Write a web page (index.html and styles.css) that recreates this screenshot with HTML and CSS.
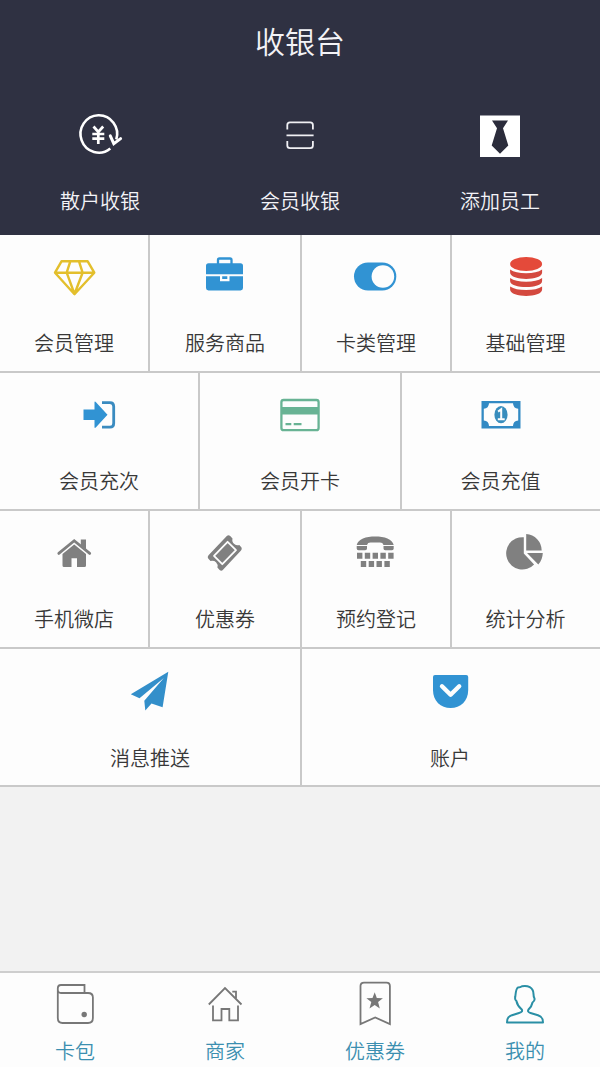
FILE: index.html
```html
<!DOCTYPE html>
<html lang="zh-CN">
<head>
<meta charset="utf-8">
<title>收银台</title>
<link rel="stylesheet" href="styles.css">
</head>
<body>
<div class="app">
  <header class="header">
    <h1 class="title">收银台</h1>
    <div class="quick">
      <a class="quick-item">
        <svg class="icon" viewBox="76 112 48 48" fill="none" stroke="#fff" stroke-width="2.600">
          <path d="M110.300 148.500A18.300 18.700 0 1 1 116.300 139.500"/>
          <path d="M110.300 135.800L113.800 143.600L120.600 138.600" stroke-width="3" stroke-linecap="round"/>
          <path d="M93.500 126.500L98.300 132L103.200 126.500M98.300 132V144M92.300 134H104.300M92.300 138.700H104.300" stroke-width="2.700"/>
        </svg>
        <span class="label">散户收银</span>
      </a>
      <a class="quick-item">
        <svg class="icon" viewBox="276 112 48 48" fill="none" stroke="#f0f0f4" stroke-width="1.800">
          <path d="M287.300 129.500V125Q287.300 122.300 290 122.300H310.200Q312.900 122.300 312.900 125V129.500M286.500 135.400H313.600M287.300 141V145.500Q287.300 148.200 290 148.200H310.200Q312.900 148.200 312.900 145.500V141"/>
        </svg>
        <span class="label">会员收银</span>
      </a>
      <a class="quick-item">
        <svg class="icon" viewBox="476 112 48 48">
          <path fill="#fff" d="M480 115.500H520V157H480Z"/>
          <path fill="#2b2c3b" d="M492 120.500H508L503 128.200L508.300 145.500L500 153.700L491.700 145.500L497 128.200Z"/>
        </svg>
        <span class="label">添加员工</span>
      </a>
    </div>
  </header>

  <main class="menu">
    <section class="row row-four">
      <a class="cell">
        <svg class="icon" viewBox="50 252 48 48" fill="none" stroke="#e3bf2c" stroke-width="2.400" stroke-linejoin="round">
          <path d="M61.500 261.300H87.700L94.300 272.700L74.500 294.200L55 272.700ZM55 272.700H94.300M70.300 261.300L66.700 272.700L74.500 294L82.600 272.700L79 261.300"/>
        </svg>
        <span class="label">会员管理</span>
      </a>
      <a class="cell">
        <svg class="icon" viewBox="201 252 48 48" fill="#3193d3">
          <path d="M218 264V260Q218 258.500 219.500 258.500H230Q231.500 258.500 231.500 260V264" fill="none" stroke="#3193d3" stroke-width="2.300"/>
          <path d="M208.500 263.300H240.500Q243 263.300 243 265.800V274.300H206V265.800Q206 263.300 208.500 263.300ZM206 276.300H220V281.200H229.500V276.300H243V288Q243 290.400 240.500 290.400H208.500Q206 290.400 206 288ZM222.200 276.300H227.300V279H222.200Z"/>
        </svg>
        <span class="label">服务商品</span>
      </a>
      <a class="cell">
        <svg class="icon" viewBox="352 252 48 48">
          <rect x="354" y="262.500" width="42.300" height="28" rx="14" fill="#3193d3"/>
          <circle cx="382.900" cy="276.500" r="11.300" fill="#fdfdfd"/>
        </svg>
        <span class="label">卡类管理</span>
      </a>
      <a class="cell">
        <svg class="icon" viewBox="501.500 252 48 48" fill="#d4493f">
          <ellipse cx="525.600" cy="264" rx="16" ry="6.900" fill="#e44a3a"/>
          <path d="M509.600 269.500Q515 273.300 525.600 273.300T541.600 269.500V272.500C541.600 281 509.600 281 509.600 272.500ZM509.600 278Q515 281.800 525.600 281.800T541.600 278V281C541.600 289 509.600 289 509.600 281ZM509.600 286.500Q515 290 525.600 290T541.600 286.500V289.500C541.600 298 509.600 298 509.600 289.500Z"/>
        </svg>
        <span class="label">基础管理</span>
      </a>
    </section>

    <section class="row row-three">
      <a class="cell">
        <svg class="icon" viewBox="75 390 48 48" fill="#3193d3">
          <path d="M83.500 409.500H94.500V402.600Q94.500 400.800 96 402.200L107.500 414.700L96 427.300Q94.500 428.700 94.500 427V420H83.500Z"/>
          <path d="M102 402.600H110Q113.700 402.600 113.700 406.500V423.200Q113.700 427.200 110 427.200H102" fill="none" stroke="#3a8bc0" stroke-width="2.800"/>
        </svg>
        <span class="label">会员充次</span>
      </a>
      <a class="cell">
        <svg class="icon" viewBox="276 390 48 48" fill="#68b394">
          <rect x="281.400" y="400" width="37.200" height="30.200" rx="2.200" fill="none" stroke="#68b394" stroke-width="2.300"/>
          <path d="M281 407H319V414.500H281ZM285.500 423H291.300V425.200H285.500ZM293.700 423H301.500V425.200H293.700Z"/>
        </svg>
        <span class="label">会员开卡</span>
      </a>
      <a class="cell">
        <svg class="icon" viewBox="476.500 390 48 48">
          <path fill="#328ac4" fill-rule="evenodd" d="M481 401H520V428.400H481ZM488.500 403.300Q488.300 408.300 483.300 408.800V420.600Q488.300 421 488.500 426H512.500Q512.700 421 517.700 420.600V408.800Q512.700 408.300 512.500 403.300Z"/>
          <ellipse cx="500.500" cy="414.700" rx="6.600" ry="8.600" fill="#388dbd"/>
          <path d="M497.600 411.600L500.700 409.300V418.800M497.300 419.300H504.200" fill="none" stroke="#fdfdfd" stroke-width="2"/>
        </svg>
        <span class="label">会员充值</span>
      </a>
    </section>

    <section class="row row-four">
      <a class="cell">
        <svg class="icon" viewBox="50 528 48 48" fill="#808080">
          <path d="M58.800 553.400L74.200 540.700L89.700 553.400" fill="none" stroke="#808080" stroke-width="2.800" stroke-linecap="round"/>
          <path d="M80.800 539.500H86V550L80.800 545.500ZM62.500 554L74.200 544.500L86 554V565.500Q86 567 84.500 567H77V558.300H71.500V567H64Q62.500 567 62.500 565.500Z"/>
        </svg>
        <span class="label">手机微店</span>
      </a>
      <a class="cell">
        <svg class="icon" viewBox="201 528 48 48">
          <path fill="#808080" d="M226.800 536Q228.500 534.300 230.200 536L232.500 538.500Q231.700 542 234.300 544Q236.500 545.700 239.300 545L241.500 547.500Q242.300 549 241 550.600L223 569.800Q221.500 571.600 219.600 570L217.400 567.500Q218.300 564.500 216 562.300Q214 560.300 210.500 561L208.200 558.500Q207 557 208.500 555.200Z"/>
          <path fill="#808080" stroke="#fdfdfd" stroke-width="1.800" stroke-linejoin="round" d="M227.600 541.800L236 550.200L222.300 564.200L214 555.800Z"/>
        </svg>
        <span class="label">优惠券</span>
      </a>
      <a class="cell">
        <svg class="icon" viewBox="352 528 48 48" fill="#808080">
          <path d="M356.700 545C358 539 366 536.500 375.200 536.500S392.500 539 393.700 545H383.500Q382.800 542.600 380 542.600H370.500Q367.600 542.600 367 545ZM356.700 546H367V548.500Q367 550.200 365.200 550.200H358.500Q356.700 550.200 356.700 548.500ZM383.500 546H393.700V548.500Q393.700 550.200 392 550.200H385.200Q383.500 550.200 383.500 548.500Z"/>
          <path d="M357 552.800h5.400v6h-5.400zM364.800 552.800h5.400v6h-5.400zM372.600 552.800h5.400v6h-5.400zM380.400 552.800h5.400v6h-5.400zM388.200 552.800h5.400v6h-5.400zM360.800 561h5.400v6h-5.400zM368.700 561h5.400v6h-5.400zM376.500 561h5.400v6h-5.400zM384.400 561h5.400v6h-5.400z"/>
        </svg>
        <span class="label">预约登记</span>
      </a>
      <a class="cell">
        <svg class="icon" viewBox="501.500 528 48 48" fill="#808080">
          <path d="M523.300 537.200V553.500L533.600 564.500A16.200 16.200 0 1 1 523.300 537.200ZM525.700 534A16.500 16.500 0 0 1 541.200 550.500H525.700ZM526.500 553H542.300Q542 560 537.800 564.500Z"/>
        </svg>
        <span class="label">统计分析</span>
      </a>
    </section>

    <section class="row row-two">
      <a class="cell">
        <svg class="icon" viewBox="126 666 48 48" fill="#338fca">
          <path d="M168.300 671.800L162.600 707.200L151.500 703.500L145.300 710.500L144.300 700.800L163.800 678L139.500 698.200L130.800 694.200Z"/>
        </svg>
        <span class="label">消息推送</span>
      </a>
      <a class="cell cell-account">
        <svg class="icon" viewBox="426 666 48 48" fill="#3193d3">
          <path d="M435 675H466.200Q468.200 675 468.200 677V690C468.200 701 460.500 708 450.600 708S433 701 433 690V677Q433 675 435 675Z"/>
          <path d="M442 686.300L450.600 694.700L459.200 686.300" fill="none" stroke="#fdfdfd" stroke-width="4.400" stroke-linecap="round" stroke-linejoin="round"/>
        </svg>
        <span class="label">账户</span>
      </a>
    </section>
  </main>

  <nav class="tabs">
    <a class="tab">
      <svg class="icon" viewBox="51 980 48 48" fill="none" stroke="#777" stroke-width="1.800">
        <path d="M84.500 993V985H61Q57.800 985 57.800 988.500V1018Q57.800 1023 62.500 1023H88Q92.900 1023 92.900 1018V997.500Q92.900 993 88 993H61Q57.800 993 57.800 989.500"/>
        <circle cx="84.200" cy="1014.500" r="2.700" fill="#777" stroke="none"/>
      </svg>
      <span class="label">卡包</span>
    </a>
    <a class="tab">
      <svg class="icon" viewBox="201 980 48 48" fill="none" stroke="#777" stroke-width="1.800">
        <path d="M208.800 1004.500L225 988L241.500 1004.500M232.300 991.700H236V998.300M213 1005.500V1020.300H221.500V1009H229.300V1020.300H238V1005.500"/>
      </svg>
      <span class="label">商家</span>
    </a>
    <a class="tab">
      <svg class="icon" viewBox="351 980 48 48" fill="none" stroke="#777" stroke-width="1.800">
        <path d="M360.500 1024V986Q360.500 982.600 364 982.600H386.500Q389.900 982.600 389.900 986V1024L375.200 1017.500Z"/>
        <path fill="#777" stroke="none" d="M374.700 992.300L376.800 998L382.900 998.200L378.100 1002L379.800 1008.600L374.700 1005.100L369.500 1008.600L371.300 1002L366.400 998.200L372.500 998Z"/>
      </svg>
      <span class="label">优惠券</span>
    </a>
    <a class="tab">
      <svg class="icon" viewBox="501 980 48 48" fill="none" stroke="#2a8fa5" stroke-width="2" stroke-linejoin="round">
        <path d="M507 1022.400C507 1017.500 509 1016.500 512 1015.200L519 1013Q523.500 1012 521.500 1009.200C518.500 1006.500 517 1004 516.500 1001.200Q514.500 1000 515.300 996.500C515.700 992 516.500 988 518 987.500Q520.500 987.500 522 986.300C527.500 985 533.500 987.500 533.500 994Q533.500 997 534.500 998.500Q535 1001 532.500 1002.500C532 1005.500 530.500 1007.500 528.500 1009.500Q527 1012 530.500 1013L538 1015.200C541.500 1016.500 543 1018 543 1022.400Z"/>
      </svg>
      <span class="label">我的</span>
    </a>
  </nav>
</div>
</body>
</html>
```
FILE: styles.css
```css
* {
  box-sizing: border-box;
}

body {
  margin: 0;
  font-family: "Noto Sans CJK SC", sans-serif;
  font-weight: 350;
  background: #f2f2f2;
}

.app {
  display: flex;
  flex-direction: column;
  width: 600px;
  height: 1067px;
  overflow: hidden;
}

.header {
  height: 235px;
  background: #2f3142;
  color: #f3f3f7;
}

.title {
  margin: 0;
  padding-top: 18px;
  height: 95px;
  font-size: 30px;
  font-weight: 350;
  line-height: 44px;
  text-align: center;
}

.quick {
  display: grid;
  grid-template-columns: repeat(3, 1fr);
}

.quick-item,
.cell,
.tab {
  display: flex;
  flex-direction: column;
  align-items: center;
}

.quick-item {
  padding-top: 17px;
}

.icon {
  display: block;
  width: 48px;
  height: 48px;
}

.label {
  margin-top: 28px;
  font-size: 20px;
  line-height: 30px;
  white-space: nowrap;
}

.quick-item .label {
  margin-top: 26px;
}

.row {
  display: grid;
  height: 138px;
  background: #fdfdfd;
  border-bottom: 2px solid #c9c9c9;
}

.row-four {
  grid-template-columns: 150px 152px 150px 148px;
}

.row-three {
  grid-template-columns: 200px 202px 198px;
}

.row-two {
  grid-template-columns: 302px 298px;
}

.row-two .label {
  margin-top: 29px;
}

.cell {
  padding-top: 17px;
  border-right: 2px solid #c9c9c9;
  color: #383838;
}

.cell:last-child {
  border-right: 0;
  padding-right: 1px;
}

.cell.cell-account {
  padding-right: 2px;
}

.tabs {
  display: grid;
  grid-template-columns: repeat(4, 1fr);
  height: 96px;
  margin-top: auto;
  background: #fdfdfd;
  border-top: 2px solid #cecece;
}

.tab {
  padding-top: 7px;
  color: #3b8fb0;
}

.tab .label {
  margin-top: 8px;
}
```
